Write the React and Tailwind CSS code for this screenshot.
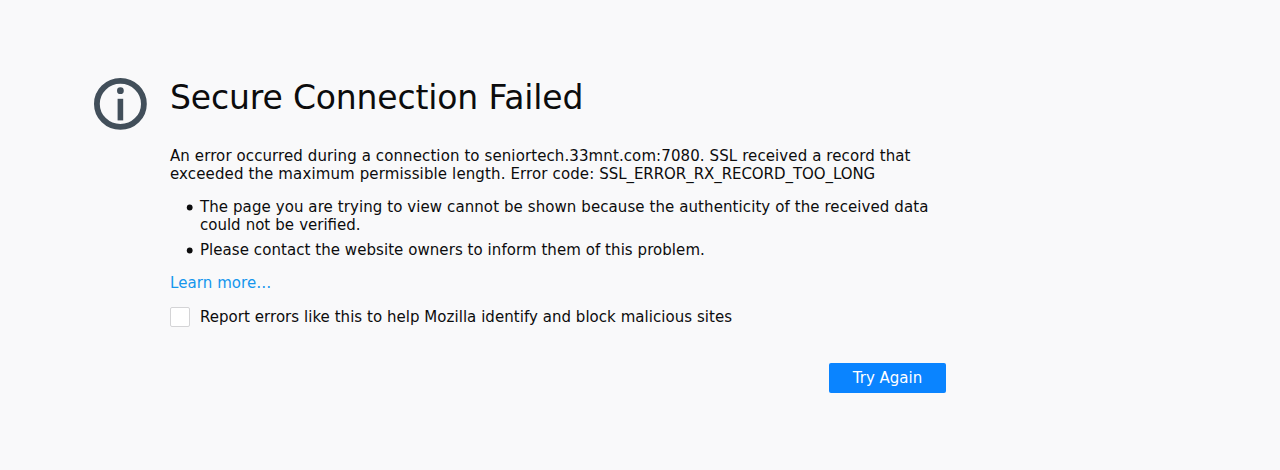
import React, { useState } from 'react';

const InfoIcon = () => (
  <svg className="w-[54px] h-[54px] shrink-0" viewBox="0 0 54 54" fill="none">
    <ellipse cx="27.4" cy="26.9" rx="23.5" ry="23" stroke="#424f5a" strokeWidth="5.8" />
    <circle cx="27.4" cy="13.7" r="3.4" fill="#424f5a" />
    <rect x="24.6" y="21.8" width="5.6" height="21.6" fill="#424f5a" />
  </svg>
);

const Reason = ({ children }) => (
  <li className="flex mb-[7px]">
    <svg className="w-[30px] h-[18px] shrink-0" viewBox="0 0 30 18">
      <circle cx="19.7" cy="9.5" r="2.9" fill="#0c0c0d" />
    </svg>
    <div>{children}</div>
  </li>
);

const App = () => {
  const [report, setReport] = useState(false);

  return (
    <div className="min-h-screen bg-[#f9f9fa] text-[#0c0c0d] font-['DejaVu_Sans',sans-serif] text-[15px] leading-[18px]">
      <div className="flex items-start pl-[93px] pt-[77px]">
        <InfoIcon />
        <div className="ml-[23px] w-[776px]">
          <h1 className="pt-px text-[33px] leading-[40px] tracking-[-0.15px]">Secure Connection Failed</h1>

          <p className="mt-[29px]">
            <span className="tracking-[0.1px]">
              An error occurred during a connection to seniortech.33mnt.com:7080. SSL received a record that
            </span>
            <br />
            <span className="tracking-[0.125px]">exceeded the maximum permissible length. Error code: </span>
            <span className="tracking-[-0.06px]">SSL_ERROR_RX_RECORD_TOO_LONG</span>
          </p>

          <ul className="mt-[15px]">
            <Reason>
              <span className="tracking-[0.087px]">
                The page you are trying to view cannot be shown because the authenticity of the received data
              </span>
              <br />
              <span className="[word-spacing:0.3px]">could not be verified.</span>
            </Reason>
            <Reason>
              <span className="tracking-[0.06px]">
                Please contact the website owners to inform them of this problem.
              </span>
            </Reason>
          </ul>

          <a href="#" className="block mt-[15px] text-[#1496ed] tracking-[0.08px]">Learn more…</a>

          <label className="flex items-center mt-[15px]">
            <input
              type="checkbox"
              checked={report}
              onChange={(e) => setReport(e.target.checked)}
              className="appearance-none size-5 mr-2.5 bg-white border border-[#d4d4d6] rounded-[2px] checked:bg-[#0a84ff]"
            />
            <span className="tracking-[0.042px]">
              Report errors like this to help Mozilla identify and block malicious sites
            </span>
          </label>

          <div className="flex justify-end mt-[36px]">
            <button className="w-[117px] h-[30px] rounded-[2px] bg-[#0a84ff] text-white">Try Again</button>
          </div>
        </div>
      </div>
    </div>
  );
};

export default App;
